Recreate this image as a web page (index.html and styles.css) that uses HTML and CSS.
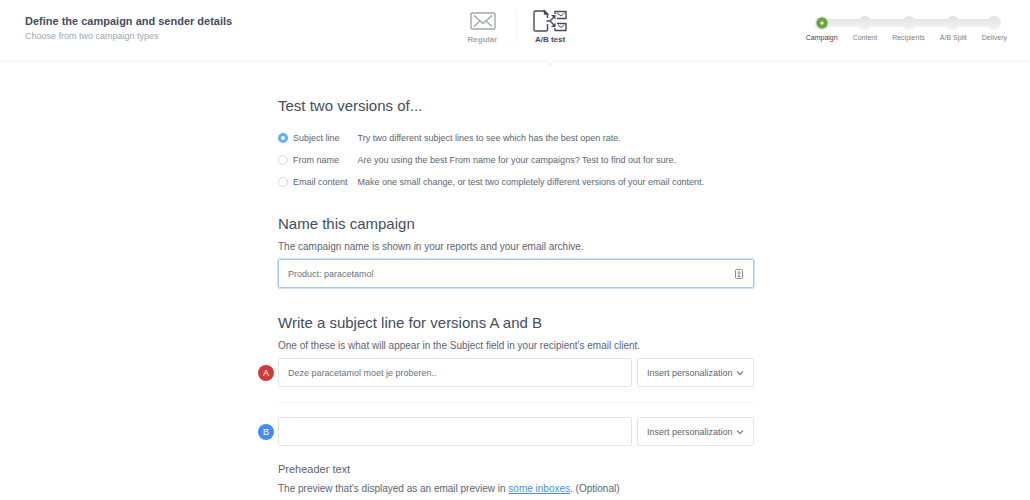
FILE: index.html
```html
<!DOCTYPE html>
<html lang="en">
<head>
<meta charset="utf-8" />
<title>Define the campaign and sender details</title>
<link rel="stylesheet" href="styles.css">
</head>

<body>
<header class="header">
    <div class="intro">
        <h1>Define the campaign and sender details</h1>
        <p>Choose from two campaign types</p>
    </div>
    <nav class="types">
        <a class="type" href="#">
            <svg width="26" height="20" viewBox="0 0 26 20" fill="none" stroke="currentColor" stroke-width="1.4">
                <rect x="1" y="2" width="24" height="16" rx="1" />
                <path d="M4 4.500l9 8 9-8M4 15.500l5.500-5M22 15.500l-5.500-5" />
            </svg>
            <span>Regular</span>
        </a>
        <a class="type active" href="#">
            <svg width="34" height="24" viewBox="0 0 34 24" fill="none" stroke="currentColor" stroke-width="1.4">
                <path d="M14.500 9V5l-3-3H2.500Q1 2 1 3.500v17Q1 22 2.500 22h10.500q1.500 0 1.500-1.500V15" />
                <path d="M11.500 2v3h3z" fill="currentColor" />
                <path d="M13.500 12h3.500M17 12l4-4M17 12l4 4" />
                <path d="M22.500 6v4.500L18 6zM22.500 18v-4.500L18 18z" fill="currentColor" stroke="none" />
                <path d="M22 5V2.500h11v7h-9M22 19v2.500h11v-7h-9" />
                <path d="M24 4l4 3 3.500-3M25 16l3 2.500 3.500-2.500" stroke-width="1" />
            </svg>
            <span>A/B test</span>
        </a>
    </nav>
    <ol class="steps">
        <li class="current">Campaign</li>
        <li>Content</li>
        <li>Recipients</li>
        <li>A/B Split</li>
        <li>Delivery</li>
    </ol>
</header>

<form class="main" action="#" method="post">
    <section>
        <h2>Test two versions of...</h2>
        <div class="options">
            <input id="subject" name="test" type="radio" checked />
            <label for="subject">Subject line</label>
            <p>Try two different subject lines to see which has the best open rate.</p>
            <input id="from" name="test" type="radio" />
            <label for="from">From name</label>
            <p>Are you using the best From name for your campaigns? Test to find out for sure.</p>
            <input id="content" name="test" type="radio" />
            <label for="content">Email content</label>
            <p>Make one small change, or test two completely different versions of your email content.</p>
        </div>
    </section>

    <section>
        <h2><label for="name">Name this campaign</label></h2>
        <p class="hint">The campaign name is shown in your reports and your email archive.</p>
        <div class="field focused">
            <input id="name" name="name" type="text" value="Product: paracetamol" />
            <svg width="8" height="10" viewBox="0 0 8 10" fill="none" stroke="#8a8a8a">
                <rect x=".5" y=".5" width="7" height="9" rx="1" />
                <path d="M4 2v1.500M2.500 4h3M4 4v3M2.500 7.500h3" />
            </svg>
        </div>
    </section>

    <section>
        <h2>Write a subject line for versions A and B</h2>
        <p class="hint">One of these is what will appear in the Subject field in your recipient's email client.</p>
        <div class="version">
            <label class="badge badge-a" for="line-a">A</label>
            <div class="field">
                <input id="line-a" name="line-a" type="text" value="Deze paracetamol moet je proberen.." />
            </div>
            <button type="button">Insert personalization
                <svg width="8" height="6" viewBox="0 0 8 6" fill="none" stroke="#7d8797" stroke-width="1.3"><path d="M1 1.500l3 3 3-3" /></svg>
            </button>
        </div>
        <hr />
        <div class="version">
            <label class="badge badge-b" for="line-b">B</label>
            <div class="field">
                <input id="line-b" name="line-b" type="text" value="" />
            </div>
            <button type="button">Insert personalization
                <svg width="8" height="6" viewBox="0 0 8 6" fill="none" stroke="#7d8797" stroke-width="1.3"><path d="M1 1.500l3 3 3-3" /></svg>
            </button>
        </div>
        <h3>Preheader text</h3>
        <p class="hint">The preview that's displayed as an email preview in <a href="#">some inboxes</a>. (Optional)</p>
    </section>
</form>
</body>
</html>
```

FILE: styles.css
```css
* {
    box-sizing:border-box;
}
body {
    margin:0;
    background:#fff;
    color:#5b6473;
    font-family:"Liberation Sans", Arial, sans-serif;
    font-size:9px;
}
h1, h2, h3, p, ol {
    margin:0;
    padding:0;
    font-weight:normal;
}

/* header */
.header {
    display:grid;
    grid-template-columns:1fr auto 1fr;
    height:62px;
    padding:0 23px 0 25px;
    border-bottom:2px solid #f6f7f8;
}
.intro {
    padding-top:14px;
}
.intro h1 {
    color:#434d5f;
    font-size:11px;
    font-weight:bold;
    line-height:14px;
}
.intro p {
    color:#9aa5b3;
    line-height:16px;
}
.types {
    display:flex;
    padding-top:9px;
}
.type {
    position:relative;
    display:flex;
    flex-direction:column;
    align-items:center;
    width:67px;
    height:34px;
    color:#a3a6ab;
    font-size:8px;
    font-weight:bold;
    line-height:10px;
    text-decoration:none;
}
.type svg {
    flex:none;
    height:24px;
    margin-bottom:2px;
}
.type.active {
    border-left:1px solid #f4f5f6;
    color:#454b5b;
}
.type.active::after { /* notch under the open tab */
    content:"";
    position:absolute;
    top:47px;
    left:29px;
    width:7px;
    height:7px;
    background:#fff;
    border:solid #eceeef;
    border-width:0 1px 1px 0;
    transform:rotate(45deg);
}

/* progress */
.steps {
    position:relative;
    display:flex;
    justify-self:end;
    align-self:start;
    gap:15px;
    padding-top:16px;
    color:#808080;
    font-size:7px;
    line-height:8px;
    list-style:none;
}
.steps::before {
    content:"";
    position:absolute;
    top:19px;
    left:16px;
    right:12px;
    height:8px;
    background:linear-gradient(#e4e4e4, #f1f1f1);
}
.steps li {
    position:relative;
    display:flex;
    flex-direction:column;
    align-items:center;
    gap:4px;
}
.steps li::before {
    content:"";
    width:14px;
    height:14px;
    border-radius:50%;
    background:linear-gradient(#e2e2e2, #f3f3f3);
}
.steps .current {
    color:#444;
}
.steps .current::before {
    background:radial-gradient(circle, #fff 0 1px, #69a838 2px 5px, #e4e4e4 6px);
}

/* form */
.main {
    width:478px;
    max-width:100%;
    margin:0 auto;
    padding:34px 0 0 2px;
}
section {
    margin-bottom:21px;
}
h2 {
    margin-bottom:4px;
    color:#434d5f;
    font-size:15px;
    line-height:20px;
}
h3 {
    margin-top:14px;
    font-size:11px;
    line-height:18px;
}
.hint {
    margin-bottom:4px;
    font-size:10px;
    line-height:17px;
}
.hint a {
    color:#4a8cf0;
}
h3 + .hint {
    margin-top:2px;
}
.options {
    display:grid;
    grid-template-columns:auto auto 1fr;
    align-items:center;
    margin-top:11px;
    line-height:22px;
}
.options p {
    margin-left:10px;
    white-space:nowrap;
}
.options input {
    appearance:none;
    width:10px;
    height:10px;
    margin:0 5px 0 0;
    border:1px solid #d6d9de;
    border-radius:50%;
    background:#fff;
}
.options input:checked {
    border:3px solid #5eaefb;
}
.field {
    display:flex;
    flex:1;
    align-items:center;
    height:29px;
    padding:0 10px 0 9px;
    border:1px solid #e1e4e8;
    border-radius:2px;
}
.field input {
    flex:1;
    min-width:0;
    padding:0;
    border:0;
    outline:0;
    background:none;
    color:#6b7280;
    font:inherit;
}
.focused {
    margin-bottom:25px;
    border-color:#a5c8fb;
    box-shadow:0 0 0 1px #cfe2fd;
}
.version {
    position:relative;
    display:flex;
    gap:5px;
}
.version button {
    display:flex;
    align-items:center;
    justify-content:space-between;
    width:117px;
    padding:0 9px;
    border:1px solid #e1e4e8;
    border-radius:2px;
    background:#fff;
    color:#5b6473;
    font:inherit;
    white-space:nowrap;
}
.badge { /* hangs in the margin left of the field */
    position:absolute;
    top:7px;
    right:100%;
    width:16px;
    height:16px;
    margin-right:4px;
    border-radius:50%;
    color:#fff;
    line-height:16px;
    text-align:center;
}
.badge-a {
    background:#cf3b3b;
}
.badge-b {
    background:#428df6;
}
hr {
    margin:15px 0 14px;
    border:0;
    border-top:1px solid #f3f4f5;
}
```
